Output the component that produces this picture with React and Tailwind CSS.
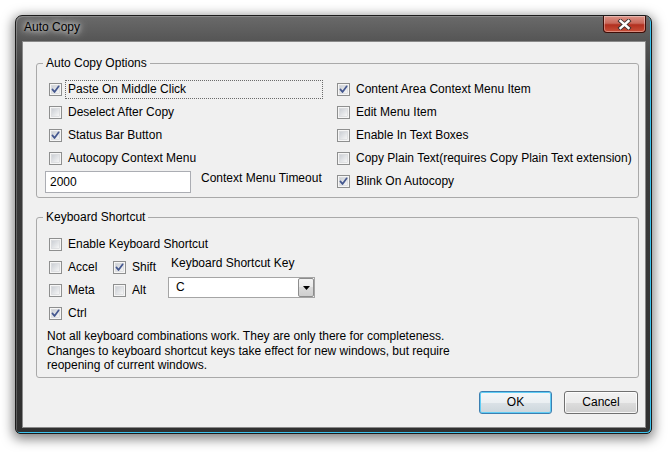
import React from "react";

let gid = 0;

function Cb({ checked }) {
  const id = React.useMemo(() => "cbg" + gid++, []);
  return (
    <svg width="13" height="13" viewBox="0 0 13 13" className="shrink-0">
      <defs>
        <linearGradient id={id} x1="0" y1="0" x2="1" y2="1">
          <stop offset="0" stopColor="#c9cdd3" />
          <stop offset="1" stopColor="#f8f8f8" />
        </linearGradient>
      </defs>
      <rect x="0.5" y="0.5" width="12" height="12" fill="#f6f6f6" stroke="#8e8f8f" />
      <rect x="2.5" y="2.5" width="8" height="8" fill={`url(#${id})`} stroke="#d2d4d7" strokeWidth="0.6" />
      {checked && (
        <path
          d="M3.4 6.4 L5.5 9 L9.7 3.3"
          fill="none"
          stroke="#44578f"
          strokeWidth="1.7"
          strokeLinecap="round"
          strokeLinejoin="round"
        />
      )}
    </svg>
  );
}

function Row({ checked, label, focus }) {
  return (
    <div className="flex h-[23px] items-center">
      <Cb checked={checked} />
      <span
        className={
          focus
            ? "ml-[3px] w-[258px] whitespace-nowrap border border-dotted border-[#6a6a6a] px-[2px] leading-[17px]"
            : "ml-[3px] whitespace-nowrap border border-transparent px-[2px] leading-[17px]"
        }
      >
        {label}
      </span>
    </div>
  );
}

function Btn({ children, def }) {
  return (
    <div
      className={
        def
          ? "flex h-[23px] w-[73px] items-center justify-center rounded-[3px] border border-[#3c7fb1] bg-[linear-gradient(180deg,#f4f7f9_0%,#ebeff2_50%,#dbe2e7_50%,#ccd6dc_100%)] leading-[15px] shadow-[inset_0_0_0_1px_#60cdf5]"
          : "flex h-[23px] w-[74px] items-center justify-center rounded-[3px] border border-[#707070] bg-[linear-gradient(180deg,#f2f2f2_0%,#ebebeb_50%,#dddddd_50%,#cfcfcf_100%)] leading-[15px] shadow-[inset_0_0_0_1px_rgba(255,255,255,0.8)]"
      }
    >
      {children}
    </div>
  );
}

export default function App() {
  return (
    <div className="h-[452px] w-[670px] overflow-hidden bg-white pl-[15px] pt-[15px] font-[family-name:'Liberation_Sans',Arial,sans-serif] text-[12px] text-black">
      <div className="flex h-[419px] w-[637px] flex-col rounded-t-[7px] rounded-b-[5px] border border-[#1c1c1c] bg-[linear-gradient(180deg,#6a6a6a_0px,#565656_24px,#3f3f3f_60px,#303030_100%)] shadow-[inset_-1px_-1px_0_#3cc3ee,inset_1px_1px_0_rgba(255,255,255,0.22),0_3px_12px_2px_rgba(0,0,0,0.5)]">
        {/* Title bar */}
        <div className="flex h-[25px] justify-between">
          <span className="ml-[8px] mt-[4px] h-[15px] leading-[15px] [text-shadow:0_0_10px_rgba(255,255,255,0.9),0_0_5px_rgba(255,255,255,0.85)]">
            Auto Copy
          </span>
          <div className="mr-[5px] flex h-[17px] w-[43px] items-center justify-center rounded-b-[4px] border border-t-0 border-[#3e0d07] bg-[linear-gradient(180deg,#dc9488_0%,#c9685a_45%,#b2301f_55%,#c8503a_100%)] shadow-[inset_0_0_0_1px_rgba(255,255,255,0.35)]">
            <svg width="15" height="11" viewBox="0 0 15 11">
              <path d="M3.5 2 L11.5 9 M11.5 2 L3.5 9" stroke="#3b302f" strokeWidth="4.2" strokeLinecap="square" />
              <path d="M3.5 2 L11.5 9 M11.5 2 L3.5 9" stroke="#ffffff" strokeWidth="2.4" strokeLinecap="square" />
            </svg>
          </div>
        </div>

        {/* Client area */}
        <div className="mb-[5px] ml-[6px] mr-[5px] flex flex-1 flex-col border border-[#8a8a8a] bg-[#f0f0f0] pl-[13px] pr-[6px] pt-[14px]">
          {/* Auto Copy Options */}
          <fieldset className="rounded-[3px] border border-[#a9a9a9] pb-[4px] pl-[12px] pt-[7px]">
            <legend className="ml-[-6px] px-[3px] leading-[15px]">Auto Copy Options</legend>
            <div className="grid grid-cols-[288px_1fr]">
              <div className="flex flex-col">
                <Row checked label="Paste On Middle Click" focus />
                <Row label="Deselect After Copy" />
                <Row checked label="Status Bar Button" />
                <Row label="Autocopy Context Menu" />
                <div className="flex h-[23px] items-start">
                  <div className="ml-[-4px] mt-[1px] h-[22px] w-[146px] border border-[#abadb3] bg-white pl-[4px] leading-[20px]">
                    2000
                  </div>
                  <span className="ml-[10px] mt-[1px] whitespace-nowrap leading-[15px]">Context Menu Timeout</span>
                </div>
              </div>
              <div className="flex flex-col">
                <Row checked label="Content Area Context Menu Item" />
                <Row label="Edit Menu Item" />
                <Row label="Enable In Text Boxes" />
                <Row label="Copy Plain Text(requires Copy Plain Text extension)" />
                <Row checked label="Blink On Autocopy" />
              </div>
            </div>
          </fieldset>

          {/* Keyboard Shortcut */}
          <fieldset className="mt-[12px] rounded-[3px] border border-[#a9a9a9] pb-[4px] pl-[12px] pt-[8px]">
            <legend className="ml-[-6px] px-[3px] leading-[15px]">Keyboard Shortcut</legend>
            <Row label="Enable Keyboard Shortcut" />
            <div className="flex">
              <div className="grid grid-cols-[64px_55px]">
                <Row label="Accel" />
                <Row checked label="Shift" />
                <Row label="Meta" />
                <Row label="Alt" />
                <Row checked label="Ctrl" />
              </div>
              <div className="flex flex-col">
                <span className="pl-[3px] leading-[15px]">Keyboard Shortcut Key</span>
                <div className="mt-[6px] flex h-[21px] w-[147px] items-center border border-[#a5a5a5] bg-white">
                  <span className="flex-1 pl-[7px] leading-[15px]">C</span>
                  <div className="flex h-[19px] w-[16px] items-center justify-center rounded-[2px] border border-[#8d8d8d] bg-[linear-gradient(180deg,#f3f3f3_0%,#e9e9e9_50%,#dadada_50%,#cfcfcf_100%)]">
                    <svg width="7" height="4" viewBox="0 0 7 4">
                      <path d="M0 0 H7 L3.5 4 Z" fill="#000" />
                    </svg>
                  </div>
                </div>
              </div>
            </div>
            <p className="ml-[-2px] mt-[4px] whitespace-nowrap leading-[14.5px]">
              Not all keyboard combinations work. They are only there for completeness.
              <br />
              Changes to keyboard shortcut keys take effect for new windows, but require
              <br />
              reopening of current windows.
            </p>
          </fieldset>

          {/* Buttons */}
          <div className="mr-[1px] mt-[13px] flex justify-end gap-[12px]">
            <Btn def>OK</Btn>
            <Btn>Cancel</Btn>
          </div>
        </div>
      </div>
    </div>
  );
}
